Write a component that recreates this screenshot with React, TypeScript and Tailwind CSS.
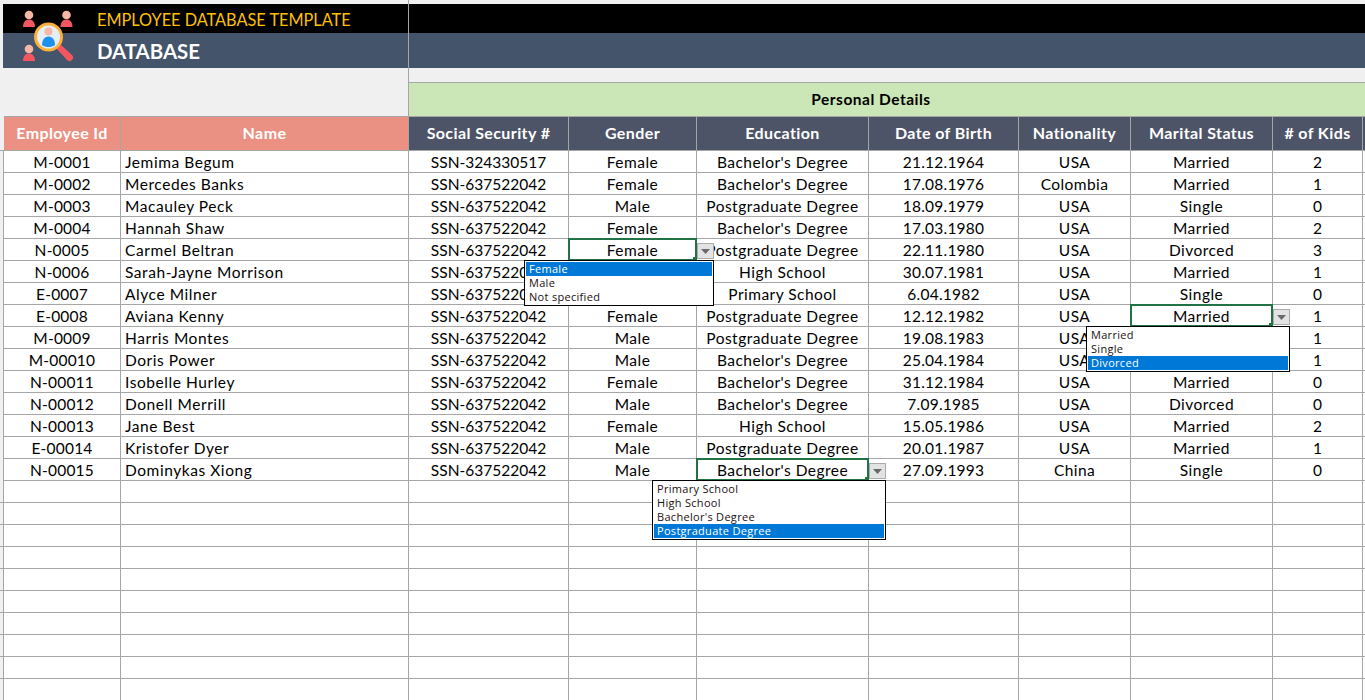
const rows: string[][] = [
  ["M-0001", "Jemima Begum", "SSN-324330517", "Female", "Bachelor's Degree", "21.12.1964", "USA", "Married", "2"],
  ["M-0002", "Mercedes Banks", "SSN-637522042", "Female", "Bachelor's Degree", "17.08.1976", "Colombia", "Married", "1"],
  ["M-0003", "Macauley Peck", "SSN-637522042", "Male", "Postgraduate Degree", "18.09.1979", "USA", "Single", "0"],
  ["M-0004", "Hannah Shaw", "SSN-637522042", "Female", "Bachelor's Degree", "17.03.1980", "USA", "Married", "2"],
  ["N-0005", "Carmel Beltran", "SSN-637522042", "Female", "Postgraduate Degree", "22.11.1980", "USA", "Divorced", "3"],
  ["N-0006", "Sarah-Jayne Morrison", "SSN-637522042", "Female", "High School", "30.07.1981", "USA", "Married", "1"],
  ["E-0007", "Alyce Milner", "SSN-637522042", "Female", "Primary School", "6.04.1982", "USA", "Single", "0"],
  ["E-0008", "Aviana Kenny", "SSN-637522042", "Female", "Postgraduate Degree", "12.12.1982", "USA", "Married", "1"],
  ["M-0009", "Harris Montes", "SSN-637522042", "Male", "Postgraduate Degree", "19.08.1983", "USA", "Married", "1"],
  ["M-00010", "Doris Power", "SSN-637522042", "Male", "Bachelor's Degree", "25.04.1984", "USA", "Married", "1"],
  ["N-00011", "Isobelle Hurley", "SSN-637522042", "Female", "Bachelor's Degree", "31.12.1984", "USA", "Married", "0"],
  ["N-00012", "Donell Merrill", "SSN-637522042", "Male", "Bachelor's Degree", "7.09.1985", "USA", "Divorced", "0"],
  ["N-00013", "Jane Best", "SSN-637522042", "Female", "High School", "15.05.1986", "USA", "Married", "2"],
  ["E-00014", "Kristofer Dyer", "SSN-637522042", "Male", "Postgraduate Degree", "20.01.1987", "USA", "Married", "1"],
  ["N-00015", "Dominykas Xiong", "SSN-637522042", "Male", "Bachelor's Degree", "27.09.1993", "China", "Single", "0"],
];

const headers = ["Employee Id", "Name", "Social Security #", "Gender", "Education", "Date of Birth", "Nationality", "Marital Status", "# of Kids"];

const grid = "grid grid-cols-[4px_117px_288px_160px_128px_172px_150px_112px_142px_90px_1fr]";
const line = "border-[#a6a6a6]";

const tracking = [
  "tracking-[0.2px]",
  "tracking-[0.56px]",
  "tracking-[0px]",
  "tracking-[0.47px]",
  "tracking-[0.47px]",
  "tracking-[0.24px]",
  "tracking-[0.4px]",
  "tracking-[0.47px]",
  "tracking-[0px]",
];

type Drop = { ring: string; btn: string; menu: string; items: string[]; active: number };

const drops: Record<string, Drop> = {
  "4-3": {
    ring: "w-[129px]",
    btn: "left-[128px]",
    menu: "w-[190px]",
    items: ["Female", "Male", "Not specified"],
    active: 0,
  },
  "7-7": {
    ring: "w-[143px]",
    btn: "left-[142px]",
    menu: "w-[204px]",
    items: ["Married", "Single", "Divorced"],
    active: 2,
  },
  "14-4": {
    ring: "w-[173px]",
    btn: "left-[172px]",
    menu: "w-[234px]",
    items: ["Primary School", "High School", "Bachelor's Degree", "Postgraduate Degree"],
    active: 3,
  },
};

function Dropdown({ d }: { d: Drop }) {
  return (
    <>
      <div className={`absolute left-[-1px] top-[-1px] h-[23px] border-2 border-[#217346] ${d.ring}`}>
        <div className="absolute bottom-[-2px] right-[-2px] h-[4px] w-[4px] bg-[#217346]" />
      </div>
      <div className={`absolute top-[4px] h-[16px] w-[17px] border border-[#ababab] bg-[#e3e3e3] flex items-center justify-center ${d.btn}`}>
        <svg width="9" height="5" viewBox="0 0 9 5"><path d="M0 0h9L4.500 5z" fill="#6a6a6a" /></svg>
      </div>
      <div className={`absolute left-[-45px] top-[21px] z-20 border border-black bg-white p-[1px] text-left font-['Open_Sans','Liberation_Sans',sans-serif] text-[11px] leading-[14px] tracking-[0.3px] text-[#1a1010] ${d.menu}`}>
        {d.items.map((it, i) => (
          <div key={it} className={`h-[14px] pl-[3px] whitespace-nowrap ${i === d.active ? "bg-[#0078d7] text-white" : ""}`}>{it}</div>
        ))}
      </div>
    </>
  );
}

function Logo() {
  return (
    <svg className="absolute left-[15px] top-[4px]" width="70" height="60" viewBox="0 0 70 60">
      <g>
        <circle cx="14" cy="11" r="4.300" fill="#f6b8a4" />
        <path d="M8 23c0-5 2.500-7.500 6-7.500s6 2.500 6 7.500z" fill="#f4565f" />
        <circle cx="51.500" cy="11" r="4.300" fill="#f6b8a4" />
        <path d="M45.500 23c0-5 2.500-7.500 6-7.500s6 2.500 6 7.500z" fill="#f4565f" />
        <circle cx="14" cy="45" r="4.300" fill="#f6b8a4" />
        <path d="M8 57c0-5 2.500-7.500 6-7.500s6 2.500 6 7.500z" fill="#f4565f" />
      </g>
      <path d="M41 44l4-4 12 11c1.500 1.500 1.500 3.500 0 5s-3.500 1.500-5 0z" fill="#f4565f" />
      <circle cx="33.500" cy="33" r="13" fill="#e6eef5" stroke="#fbb03b" strokeWidth="3" />
      <circle cx="33.500" cy="27.500" r="4" fill="#f6b8a4" />
      <path d="M27 41c0-5 2.500-8.500 6.500-8.500s6.500 3.500 6.500 8.500c-2 1.500-4 2-6.500 2s-4.500-.5-6.500-2z" fill="#1e90ee" />
    </svg>
  );
}

export default function App() {
  return (
    <div className="relative h-[700px] w-[1365px] overflow-hidden bg-[#f0f0f0] font-['Lato','Liberation_Sans',sans-serif] text-[15.500px] text-black">
      <div className="flex h-[116px]">
        <div className={`relative w-[409px] shrink-0 border-r pl-[3px] pt-[4px] ${line}`}>
          <div className="flex h-[29px] items-center bg-black pl-[94px] pt-[4px] text-[16.300px] text-[#ffc000]">EMPLOYEE DATABASE TEMPLATE</div>
          <div className="flex h-[35px] items-center bg-[#44546a] pl-[94px] pt-[2px] text-[20.400px] font-bold text-white">DATABASE</div>
          <Logo />
        </div>
        <div className="flex-1 pt-[4px]">
          <div className="h-[29px] bg-black" />
          <div className="h-[35px] bg-[#44546a]" />
          <div className="h-[14px]" />
          <div className={`flex h-[34px] items-center justify-center border-t bg-[#cbe7b7] pr-[32px] pt-[1px] text-[15.500px] font-bold tracking-[0.5px] ${line}`}>Personal Details</div>
        </div>
      </div>
      <div className={`${grid} h-[35px] border-y ${line} text-[16px] font-bold tracking-[0.4px] text-white`}>
        <div className="relative -mt-px bg-[#f0f0f0]" />
        {headers.map((h, i) => (
          <div key={h} className={`flex items-center justify-center border-r pb-[2px] ${line} ${i < 2 ? "bg-[#ea9183]" : "bg-[#4e5468]"}`}>{h}</div>
        ))}
        <div className="bg-[#4e5468]" />
      </div>
      {Array.from({ length: 25 }).map((_, r) => (
        <div key={r} className={`${grid} h-[22px] border-b ${line} bg-white`}>
          <div className={`border-r bg-[#f0f0f0] ${line}`} />
          {Array.from({ length: 9 }).map((_, c) => {
            const d = drops[`${r}-${c}`];
            return (
              <div
                key={c}
                className={`relative flex items-center whitespace-nowrap border-r ${line} ${tracking[c]} ${c === 1 ? "justify-start pl-[4px]" : "justify-center"} ${d ? "z-10" : ""}`}
              >
                {rows[r]?.[c]}
                {d && <Dropdown d={d} />}
              </div>
            );
          })}
          <div />
        </div>
      ))}
    </div>
  );
}
